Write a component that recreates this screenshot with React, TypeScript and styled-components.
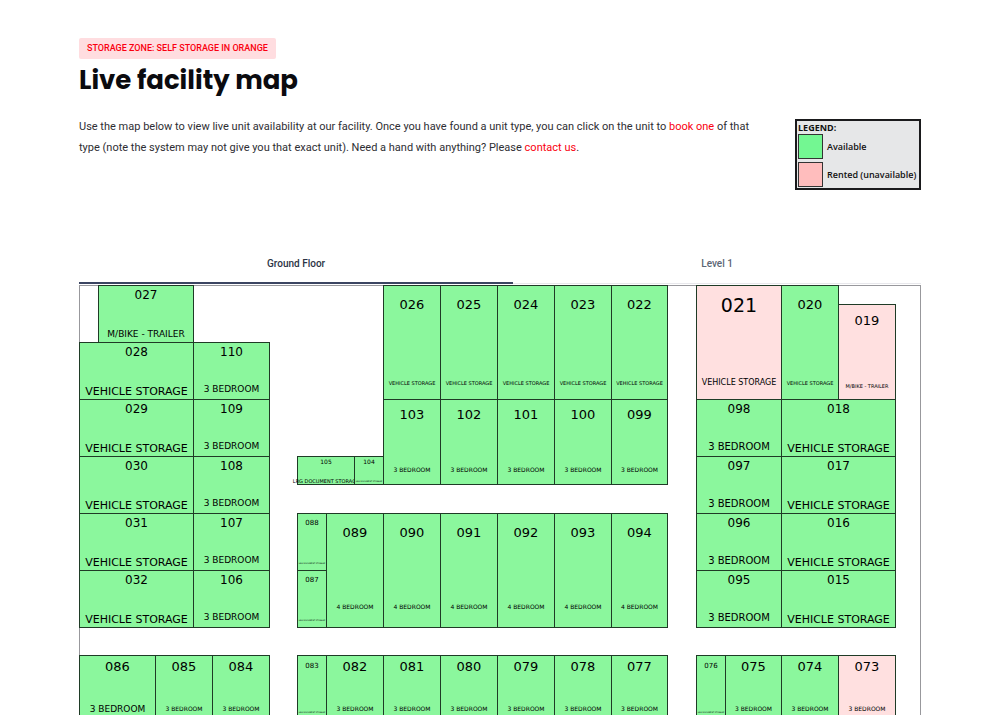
import React from "react";
import styled, { createGlobalStyle } from "styled-components";

const GlobalStyle = createGlobalStyle`
  *, *::before, *::after { box-sizing: border-box; }
  body {
    margin: 0;
    background: #fff;
    color: #2e2e33;
    font-family: Roboto, "Liberation Sans", sans-serif;
  }
`;

const Page = styled.main`
  padding: 38px 79px 0;
`;

const Badge = styled.p`
  width: fit-content;
  margin: 0 0 1px;
  padding: 0 8px;
  border-radius: 2px;
  background: #ffdde0;
  color: #fa000f;
  font-size: 9px;
  font-weight: 500;
  line-height: 21px;
  text-transform: uppercase;
`;

const Title = styled.h1`
  margin: 0 0 16px;
  color: #0b0b0f;
  font-family: Poppins, Inter, sans-serif;
  font-size: 26px;
  font-weight: 700;
  line-height: 40px;
`;

const Intro = styled.section`
  display: flex;
  align-items: flex-start;
  gap: 28px;
`;

const IntroText = styled.p`
  flex: 1;
  margin: 0;
  font-size: 11px;
  line-height: 21px;
`;

const TextLink = styled.a`
  color: #fa000f;
  text-decoration: none;
`;

const Legend = styled.aside`
  flex: none;
  margin-top: 3px;
  width: 126px;
  padding: 1px;
  border: 2px solid #1a1a1c;
  background: #e6e7e8;
  color: #111;
  font-family: "Open Sans", sans-serif;
  font-size: 9px;
  font-weight: 600;
`;

const LegendTitle = styled.h2`
  margin: 0;
  font-size: 9px;
  font-weight: 700;
  line-height: 12px;
`;

const LegendList = styled.ul`
  display: grid;
  gap: 3px;
  margin: 0;
  padding: 0;
  list-style: none;
`;

const LegendItem = styled.li`
  display: flex;
  align-items: center;
  gap: 4px;
  white-space: nowrap;
`;

const Swatch = styled.span<{ $rented?: boolean }>`
  flex: none;
  width: 25px;
  height: 25px;
  border: 1px solid #333;
  background: ${(p) => (p.$rented ? "#ffbdbd" : "#73f792")};
`;

const Tabs = styled.div`
  display: flex;
  margin-top: 53px;
  border-bottom: 1px solid #e8e8ec;
`;

const Tab = styled.button<{ $active?: boolean }>`
  flex: 1 1 auto;
  height: 41px;
  margin-bottom: -1px;
  padding: 2px 0 0;
  border: 0;
  border-bottom: 2px solid ${(p) => (p.$active ? "#3b4562" : "transparent")};
  background: none;
  color: ${(p) => (p.$active ? "#2b3445" : "#5c6675")};
  font-family: inherit;
  font-size: 10px;
  font-weight: 500;
`;

const columns = [19, 57, 38, 19, 57, 28, 29, 28, 29, 57, 57, 57, 57, 56, 29, 29, 56, 57, 57, 24];

const FloorMap = styled.div`
  display: grid;
  grid-template-columns: ${columns.map((c) => `minmax(0, ${c}fr)`).join(" ")};
  grid-template-rows: 19px 38px 57px 57px 28px 29px 57px 57px 28px 67px;
  margin-top: 1px;
  border: 1px solid #98989c;
`;

type Kind = {
  number: number;
  label: number;
  top: number;
  bottom: number;
};

/* Text sizes and insets for each shape of unit */
const kinds = {
  trailer: { number: 12, label: 9, top: 3, bottom: 3 },
  wide: { number: 12, label: 11, top: 3, bottom: 2 },
  small: { number: 12, label: 9, top: 3, bottom: 5 },
  medium: { number: 12, label: 10, top: 3, bottom: 4 },
  tall: { number: 13, label: 5, top: 12, bottom: 13 },
  large: { number: 19, label: 8, top: 10, bottom: 12 },
  narrow: { number: 13, label: 5, top: 9, bottom: 10 },
  bed3: { number: 13, label: 6, top: 8, bottom: 11 },
  bed4: { number: 13, label: 6, top: 12, bottom: 17 },
  docWide: { number: 6, label: 5, top: 2, bottom: 0 },
  docMini: { number: 6, label: 2, top: 2, bottom: 2 },
  docTall: { number: 7, label: 2, top: 6, bottom: 6 },
  lowWide: { number: 13, label: 9, top: 4, bottom: 8 },
  low: { number: 13, label: 6, top: 4, bottom: 10 },
  lowDoc: { number: 7, label: 2, top: 7, bottom: 9 },
} satisfies Record<string, Kind>;

type KindName = keyof typeof kinds;

const UnitCell = styled.a<{ $area: string; $kind: KindName; $rented?: boolean }>`
  display: flex;
  flex-direction: column;
  align-items: center;
  justify-content: space-between;
  grid-area: ${(p) => p.$area};
  min-width: 0;
  margin: -1px 0 0 -1px;
  padding: ${(p) => kinds[p.$kind].top}px 0 ${(p) => kinds[p.$kind].bottom}px;
  border: 1px solid #1f3b26;
  background: ${(p) => (p.$rented ? "#ffe0e0" : "#8bf79d")};
  color: #000;
  font-family: Verdana, "DejaVu Sans", sans-serif;
  line-height: 1;
  text-decoration: none;
  white-space: nowrap;
`;

const UnitNumber = styled.span<{ $kind: KindName }>`
  font-size: ${(p) => kinds[p.$kind].number}px;
`;

const UnitLabel = styled.span<{ $kind: KindName }>`
  font-size: ${(p) => kinds[p.$kind].label}px;
`;

type Unit = {
  id: string;
  label: string;
  kind: KindName;
  row: [number, number];
  col: [number, number];
  rented?: boolean;
};

const VEHICLE = "VEHICLE STORAGE";
const TRAILER = "M/BIKE - TRAILER";
const BED3 = "3 BEDROOM";
const BED4 = "4 BEDROOM";
const DOCS = "LRG DOCUMENT STORAGE";

const centre = [10, 11, 12, 13, 14];
const sideRows: [number, number][] = [[3, 4], [4, 5], [5, 7], [7, 8], [8, 9]];

const series = (
  ids: string[],
  label: string,
  kind: KindName,
  place: (i: number) => { row: [number, number]; col: [number, number] },
): Unit[] => ids.map((id, i) => ({ id, label, kind, ...place(i) }));

const units: Unit[] = [
  { id: "027", label: TRAILER, kind: "trailer", row: [1, 3], col: [2, 4] },
  ...series(["028", "029", "030", "031", "032"], VEHICLE, "wide", (i) => ({ row: sideRows[i], col: [1, 4] })),
  ...series(["110", "109", "108", "107", "106"], BED3, "small", (i) => ({ row: sideRows[i], col: [4, 6] })),
  ...series(["026", "025", "024", "023", "022"], VEHICLE, "tall", (i) => ({
    row: [1, 4],
    col: [centre[i], centre[i] + 1],
  })),
  { id: "105", label: DOCS, kind: "docWide", row: [5, 6], col: [7, 9] },
  { id: "104", label: DOCS, kind: "docMini", row: [5, 6], col: [9, 10] },
  ...series(["103", "102", "101", "100", "099"], BED3, "bed3", (i) => ({
    row: [4, 6],
    col: [centre[i], centre[i] + 1],
  })),
  { id: "088", label: DOCS, kind: "docTall", row: [7, 8], col: [7, 8] },
  { id: "087", label: DOCS, kind: "docTall", row: [8, 9], col: [7, 8] },
  { id: "089", label: BED4, kind: "bed4", row: [7, 9], col: [8, 10] },
  ...series(["090", "091", "092", "093", "094"], BED4, "bed4", (i) => ({
    row: [7, 9],
    col: [centre[i], centre[i] + 1],
  })),
  { id: "021", label: VEHICLE, kind: "large", row: [1, 4], col: [16, 18], rented: true },
  { id: "020", label: VEHICLE, kind: "tall", row: [1, 4], col: [18, 19] },
  { id: "019", label: TRAILER, kind: "narrow", row: [2, 4], col: [19, 20], rented: true },
  ...series(["098", "097", "096", "095"], BED3, "medium", (i) => ({ row: sideRows[i + 1], col: [16, 18] })),
  ...series(["018", "017", "016", "015"], VEHICLE, "wide", (i) => ({ row: sideRows[i + 1], col: [18, 20] })),
  { id: "086", label: BED3, kind: "lowWide", row: [10, 11], col: [1, 3] },
  { id: "085", label: BED3, kind: "low", row: [10, 11], col: [3, 5] },
  { id: "084", label: BED3, kind: "low", row: [10, 11], col: [5, 6] },
  { id: "083", label: DOCS, kind: "lowDoc", row: [10, 11], col: [7, 8] },
  { id: "082", label: BED3, kind: "low", row: [10, 11], col: [8, 10] },
  ...series(["081", "080", "079", "078", "077"], BED3, "low", (i) => ({
    row: [10, 11],
    col: [centre[i], centre[i] + 1],
  })),
  { id: "076", label: DOCS, kind: "lowDoc", row: [10, 11], col: [16, 17] },
  { id: "075", label: BED3, kind: "low", row: [10, 11], col: [17, 18] },
  { id: "074", label: BED3, kind: "low", row: [10, 11], col: [18, 19] },
  { id: "073", label: BED3, kind: "low", row: [10, 11], col: [19, 20], rented: true },
];

export default function App() {
  return (
    <>
      <GlobalStyle />
      <Page>
        <Badge>Storage Zone: Self Storage in Orange</Badge>
        <Title>Live facility map</Title>
        <Intro>
          <IntroText>
            Use the map below to view live unit availability at our facility. Once you have found a unit type, you
            can click on the unit to <TextLink href="#book">book one</TextLink> of that type (note the system may not
            give you that exact unit). Need a hand with anything? Please{" "}
            <TextLink href="#contact">contact us</TextLink>.
          </IntroText>
          <Legend>
            <LegendTitle>LEGEND:</LegendTitle>
            <LegendList>
              <LegendItem>
                <Swatch />
                Available
              </LegendItem>
              <LegendItem>
                <Swatch $rented />
                Rented (unavailable)
              </LegendItem>
            </LegendList>
          </Legend>
        </Intro>
        <Tabs role="tablist">
          <Tab role="tab" aria-selected="true" $active>
            Ground Floor
          </Tab>
          <Tab role="tab" aria-selected="false">
            Level 1
          </Tab>
        </Tabs>
        <FloorMap role="tabpanel">
          {units.map((u) => (
            <UnitCell
              key={u.id}
              href={`#unit-${u.id}`}
              $kind={u.kind}
              $rented={u.rented}
              $area={`${u.row[0]} / ${u.col[0]} / ${u.row[1]} / ${u.col[1]}`}
            >
              <UnitNumber $kind={u.kind}>{u.id}</UnitNumber>
              <UnitLabel $kind={u.kind}>{u.label}</UnitLabel>
            </UnitCell>
          ))}
        </FloorMap>
      </Page>
    </>
  );
}
